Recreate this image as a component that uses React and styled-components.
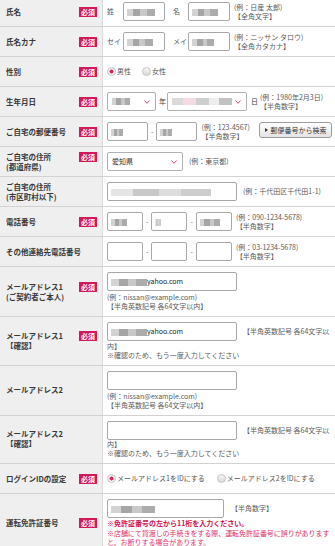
import styled, { createGlobalStyle } from "styled-components";

const GlobalStyle = createGlobalStyle`
  html, body {
    margin: 0;
    padding: 0;
    background: #ffffff;
  }
  body {
    font-family: "Noto Sans CJK JP", "Noto Sans", sans-serif;
    color: #333;
  }
`;

const Form = styled.div`
  width: 335px;
  margin-top: -3px;
  overflow: hidden;
`;

const Row = styled.div`
  display: grid;
  grid-template-columns: 103px 1fr;
  border-bottom: 1px solid #d2d2d2;
`;

const Label = styled.div`
  background: #efefef;
  border-right: 1px solid #d9d9d9;
  display: flex;
  align-items: center;
  padding: 0 5px 0 6px;
`;

const LabelInner = styled.div`
  display: flex;
  align-items: flex-start;
  justify-content: space-between;
  width: 100%;
`;

const LabelText = styled.div`
  font-size: 7.5px;
  font-weight: 700;
  line-height: 10px;
  color: #383838;
  white-space: nowrap;
`;

const Badge = styled.span`
  flex: none;
  width: 18px;
  height: 10px;
  background: #d3175a;
  color: #fff;
  font-size: 7px;
  font-weight: 700;
  line-height: 10px;
  text-align: center;
`;

const Cell = styled.div`
  padding: 5px 2px 5px 4px;
  min-height: 19px;
  font-size: 7px;
  line-height: 9px;
  color: #555;
`;

const Field = styled.span`
  display: inline-block;
  vertical-align: middle;
  box-sizing: border-box;
  width: ${(p) => p.$w}px;
  height: 19px;
  margin-left: ${(p) => p.$ml || 0}px;
  padding: 0 3px;
  border: 1px solid #a8a8a8;
  border-radius: 2px;
  background: #fff;
  font-size: 7px;
  line-height: 17px;
  color: #222;
  white-space: nowrap;
  overflow: hidden;
`;

const Select = styled.span`
  display: inline-flex;
  vertical-align: middle;
  align-items: center;
  justify-content: space-between;
  box-sizing: border-box;
  width: ${(p) => p.$w}px;
  height: 19px;
  padding: 0 5px 0 4px;
  border: 1px solid #b0b0b0;
  border-radius: 2px;
  background: #fff;
  font-size: 7px;
  color: #333;
  white-space: nowrap;
`;

const Mosaic = styled.span`
  display: inline-block;
  vertical-align: middle;
  width: ${(p) => p.$w}px;
  height: 7px;
  background: ${(p) =>
    p.$pink
      ? "linear-gradient(90deg, #d6d6d6 0 18%, #f3d6e0 18% 40%, #c9c9c9 40% 62%, #ececec 62% 78%, #bcbcbc 78% 100%)"
      : "linear-gradient(90deg, #cfcfcf 0 22%, #9c9c9c 22% 48%, #c2c2c2 48% 70%, #a4a4a4 70% 100%)"};
  filter: blur(0.7px);
  opacity: ${(p) => (p.$light ? 0.55 : 0.9)};
`;

const NameTag = styled.span`
  display: inline-block;
  vertical-align: middle;
  width: ${(p) => p.$w}px;
  margin-left: ${(p) => p.$ml || 0}px;
  color: #555;
`;

const Unit = styled.span`
  display: inline-block;
  vertical-align: middle;
  margin: 0 ${(p) => p.$mr || 0}px 0 ${(p) => p.$ml || 0}px;
  color: #444;
`;

const Dash = styled.span`
  display: inline-block;
  vertical-align: middle;
  margin: 0 3px;
  color: #666;
`;

const Note = styled.span`
  display: inline-block;
  vertical-align: middle;
  margin-left: ${(p) => p.$ml ?? 4}px;
  white-space: nowrap;
  color: #5a5a5a;
`;

const NoteLine = styled.span`
  display: block;
`;

const NoteBlock = styled.div`
  margin-top: 2px;
  white-space: nowrap;
  color: #5a5a5a;
`;

const WrapText = styled.span`
  margin-left: 6px;
  vertical-align: middle;
  color: #5a5a5a;
`;

const Plain = styled.div`
  color: #5a5a5a;
`;

const Warn = styled.div`
  margin-top: 1px;
  font-weight: 700;
  color: #d0104c;
  line-height: 9.5px;
`;

const Caution = styled.div`
  color: #e0306a;
  line-height: 9.5px;
  letter-spacing: -0.05px;
`;

const RadioLine = styled.div`
  display: flex;
  align-items: center;
  height: 19px;
  gap: ${(p) => p.$gap}px;
`;

const RadioItem = styled.span`
  display: inline-flex;
  align-items: center;
  gap: 1px;
  color: #555;
`;

const RadioDot = styled.span`
  display: inline-block;
  box-sizing: border-box;
  width: 9px;
  height: 9px;
  border-radius: 50%;
  border: 1px solid #c6c6c6;
  background: ${(p) =>
    p.$on
      ? "radial-gradient(circle, #e0245e 0 1.8px, #f5f5f5 2.3px)"
      : "linear-gradient(#f6f6f6, #d9d9d9)"};
`;

const SearchButton = styled.button`
  float: right;
  display: flex;
  align-items: center;
  justify-content: center;
  gap: 3px;
  box-sizing: border-box;
  width: 73px;
  height: 16px;
  margin-right: 1px;
  padding: 0;
  border: 1px solid #9c9c9c;
  border-radius: 3px;
  background: linear-gradient(#ffffff, #e4e4e4);
  font-family: "Noto Sans CJK JP", sans-serif;
  font-size: 7px;
  color: #333;
`;

const Arrow = styled.span`
  width: 0;
  height: 0;
  border-top: 2.5px solid transparent;
  border-bottom: 2.5px solid transparent;
  border-left: 3px solid #333;
`;

const Chevron = () => (
  <svg width="6" height="4" viewBox="0 0 6 4">
    <polyline points="0.5,0.5 3,3.3 5.5,0.5" fill="none" stroke="#e0306a" strokeWidth="0.9" />
  </svg>
);

const Radio = ({ on, children }) => (
  <RadioItem>
    <RadioDot $on={on} />
    {children}
  </RadioItem>
);

const Head = ({ lines, required }) => (
  <Label>
    <LabelInner>
      <LabelText>
        {lines.map((l) => (
          <div key={l}>{l}</div>
        ))}
      </LabelText>
      {required && <Badge>必須</Badge>}
    </LabelInner>
  </Label>
);

export default function App() {
  return (
    <>
      <GlobalStyle />
      <Form>
        <Row>
          <Head lines={["氏名"]} required />
          <Cell>
            <NameTag $w={16}>姓</NameTag>
            <Field $w={42}>
              <Mosaic $w={28} />
            </Field>
            <NameTag $w={15} $ml={8}>名</NameTag>
            <Field $w={42}>
              <Mosaic $w={26} />
            </Field>
            <Note>
              <NoteLine>(例：日産 太郎)</NoteLine>
              <NoteLine>【全角文字】</NoteLine>
            </Note>
          </Cell>
        </Row>

        <Row>
          <Head lines={["氏名カナ"]} required />
          <Cell>
            <NameTag $w={16}>セイ</NameTag>
            <Field $w={42}>
              <Mosaic $w={26} />
            </Field>
            <NameTag $w={15} $ml={8}>メイ</NameTag>
            <Field $w={42}>
              <Mosaic $w={22} />
            </Field>
            <Note>
              <NoteLine>(例：ニッサン タロウ)</NoteLine>
              <NoteLine>【全角カタカナ】</NoteLine>
            </Note>
          </Cell>
        </Row>

        <Row>
          <Head lines={["性別"]} required />
          <Cell>
            <RadioLine $gap={11}>
              <Radio on>男性</Radio>
              <Radio>女性</Radio>
            </RadioLine>
          </Cell>
        </Row>

        <Row>
          <Head lines={["生年月日"]} required />
          <Cell>
            <Select $w={49}>
              <Mosaic $w={18} />
              <Chevron />
            </Select>
            <Unit $ml={3} $mr={1}>年</Unit>
            <Select $w={80}>
              <Mosaic $w={60} $pink />
              <Chevron />
            </Select>
            <Unit $ml={4}>日</Unit>
            <Note $ml={2}>
              <NoteLine>(例：1980年2月3日)</NoteLine>
              <NoteLine>【半角数字】</NoteLine>
            </Note>
          </Cell>
        </Row>

        <Row>
          <Head lines={["ご自宅の郵便番号"]} required />
          <Cell>
            <SearchButton type="button">
              <Arrow />
              郵便番号から検索
            </SearchButton>
            <Field $w={41}>
              <Mosaic $w={12} />
            </Field>
            <Dash>-</Dash>
            <Field $w={41}>
              <Mosaic $w={12} />
            </Field>
            <Note>
              <NoteLine>(例：123-4567)</NoteLine>
              <NoteLine>【半角数字】</NoteLine>
            </Note>
          </Cell>
        </Row>

        <Row>
          <Head lines={["ご自宅の住所", "(都道府県)"]} required />
          <Cell>
            <Select $w={76}>
              愛知県
              <Chevron />
            </Select>
            <Note $ml={6}>(例：東京都)</Note>
          </Cell>
        </Row>

        <Row>
          <Head lines={["ご自宅の住所", "(市区町村以下)"]} />
          <Cell>
            <Field $w={130}>
              <Mosaic $w={100} $light />
            </Field>
            <Note $ml={6}>(例：千代田区千代田1-1)</Note>
          </Cell>
        </Row>

        <Row>
          <Head lines={["電話番号"]} required />
          <Cell>
            <Field $w={36}>
              <Mosaic $w={16} />
            </Field>
            <Dash>-</Dash>
            <Field $w={36}>
              <Mosaic $w={6} $light />
            </Field>
            <Dash>-</Dash>
            <Field $w={36}>
              <Mosaic $w={20} />
            </Field>
            <Note>
              <NoteLine>(例：090-1234-5678)</NoteLine>
              <NoteLine>【半角数字】</NoteLine>
            </Note>
          </Cell>
        </Row>

        <Row>
          <Head lines={["その他連絡先電話番号"]} />
          <Cell>
            <Field $w={36} />
            <Dash>-</Dash>
            <Field $w={36} />
            <Dash>-</Dash>
            <Field $w={36} />
            <Note>
              <NoteLine>(例：03-1234-5678)</NoteLine>
              <NoteLine>【半角数字】</NoteLine>
            </Note>
          </Cell>
        </Row>

        <Row>
          <Head lines={["メールアドレス1", "(ご契約者ご本人)"]} required />
          <Cell>
            <Field $w={130}>
              <Mosaic $w={36} />
              yahoo.com
            </Field>
            <NoteBlock>
              <NoteLine>(例：nissan@example.com)</NoteLine>
              <NoteLine>【半角英数記号 各64文字以内】</NoteLine>
            </NoteBlock>
          </Cell>
        </Row>

        <Row>
          <Head lines={["メールアドレス1", "【確認】"]} required />
          <Cell>
            <Field $w={130}>
              <Mosaic $w={36} />
              yahoo.com
            </Field>
            <WrapText>【半角英数記号 各64文字以内】</WrapText>
            <Plain>※確認のため、もう一度入力してください</Plain>
          </Cell>
        </Row>

        <Row>
          <Head lines={["メールアドレス2"]} />
          <Cell>
            <Field $w={130} />
            <NoteBlock>
              <NoteLine>(例：nissan@example.com)</NoteLine>
              <NoteLine>【半角英数記号 各64文字以内】</NoteLine>
            </NoteBlock>
          </Cell>
        </Row>

        <Row>
          <Head lines={["メールアドレス2", "【確認】"]} />
          <Cell>
            <Field $w={130} />
            <WrapText>【半角英数記号 各64文字以内】</WrapText>
            <Plain>※確認のため、もう一度入力してください</Plain>
          </Cell>
        </Row>

        <Row>
          <Head lines={["ログインIDの設定"]} required />
          <Cell>
            <RadioLine $gap={12}>
              <Radio on>メールアドレス1をIDにする</Radio>
              <Radio>メールアドレス2をIDにする</Radio>
            </RadioLine>
          </Cell>
        </Row>

        <Row>
          <Head lines={["運転免許証番号"]} required />
          <Cell>
            <Field $w={117}>
              <Mosaic $w={44} />
            </Field>
            <Note $ml={7}>【半角数字】</Note>
            <Warn>※免許証番号の左から11桁を入力ください。</Warn>
            <Caution>
              ※店舗にて貸渡しの手続きをする際、運転免許証番号に誤りがありますと、お断りする場合があります。
            </Caution>
          </Cell>
        </Row>
      </Form>
    </>
  );
}
